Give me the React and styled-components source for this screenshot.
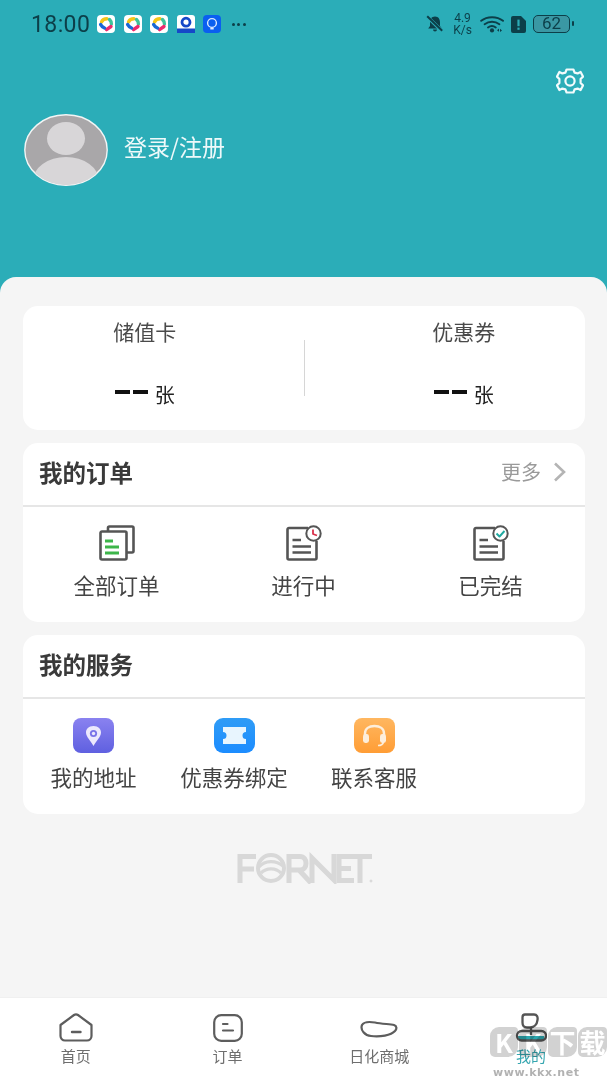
import React from "react";
import styled, { createGlobalStyle } from "styled-components";

const Global = createGlobalStyle`
  html, body { margin: 0; padding: 0; background: #f5f5f5; }
  * { box-sizing: border-box; }
  body { font-family: "Noto Sans CJK SC", "Noto Sans", sans-serif; }
`;
const Page = styled.div`
  width: 607px; height: 1080px; position: relative; overflow: hidden;
  display: flex; flex-direction: column; background: #2badb8;
`;
const Hero = styled.header`
  height: 277px; flex: none; padding: 0 24px; display: flex; flex-direction: column;
`;
const StatusBar = styled.div`
  height: 48px; margin: 0 -24px; padding: 0 33px 0 31px; display: flex; align-items: center; justify-content: space-between; color: #0c3f49;
`;
const StatusGroup = styled.div`
  display: flex; align-items: center; gap: ${p => p.$gap}px;
`;
const Clock = styled.span`
  font: 400 23px/24px Roboto, sans-serif; letter-spacing: .4px; width: 57.5px; white-space: nowrap; margin-top: 2px;
`;
const AppIcon = styled.svg`
  width: 18px; height: 18px; flex: none; display: block;
`;
const MoreDots = styled.div`
  display: flex; gap: 2.5px; margin-left: 2px;
`;
const Dot = styled.i`
  display: block; width: 3px; height: 3px; border-radius: 50%; background: #0c3f49;
`;
const Speed = styled.span`
  font: 400 12px/12px Roboto, sans-serif; text-align: center; width: 19px; margin: 0 2px 0 3px; white-space: nowrap;
`;
const Battery = styled.div`
  width: 37px; height: 18px; border: 1.5px solid #0c3f49; border-radius: 5px; background: #3a98a4;
  font: 400 17px/15px Roboto, sans-serif; text-align: center; position: relative; margin: 0 4px 0 1px;
  &::after { content: ""; position: absolute; right: -5px; top: 5px; width: 2px; height: 5px; background: #0c3f49; border-radius: 1px; }
`;
const GearRow = styled.div`
  display: flex; justify-content: flex-end; padding-top: 20px; margin-right: -1px; height: 47px;
`;
const Profile = styled.div`
  display: flex; align-items: center; gap: 16px; margin-top: 19px;
`;
const Avatar = styled.svg`
  width: 84px; height: 72px; display: block; flex: none;
`;
const LoginText = styled.span`
  color: #eef9fa; font-size: 23px; line-height: 30px; margin-top: -8px;
`;
const Sheet = styled.main`
  flex: 1; background: #f5f5f5; border-radius: 16px 16px 0 0; padding: 29px 22px 0 23px;
  display: flex; flex-direction: column; gap: 13px;
`;
const Card = styled.section`
  background: #fff; border-radius: 15px; height: ${p => p.$h}px; flex: none; display: flex; flex-direction: column;
`;
const Balance = styled.div`
  flex: 1; display: grid; grid-template-columns: 1fr 1px 1fr;
`;
const BalanceCol = styled.div`
  display: flex; flex-direction: column; align-items: center; padding: ${p => p.$right ? "11px 0 0 38px" : "11px 37px 0 0"};
`;
const BalanceLabel = styled.div`
  font-size: 21px; line-height: 28px; color: #4a4a4a;
`;
const BalanceValue = styled.div`
  display: flex; align-items: center; gap: 7px; margin-top: 34px; height: 30px; color: #222; font-size: 20px;
`;
const Dash = styled.i`
  display: block; width: 15px; height: 4px; background: #111;
`;
const Dashes = styled.span`
  display: flex; gap: 3px; margin-top: -4px;
`;
const Divider = styled.div`
  width: 1px; height: 56px; margin-top: 34px; background: #d6d6d6;
`;
const CardHead = styled.div`
  height: 64px; flex: none; border-bottom: 2px solid #e6e6e6; padding: 0 19px 5px 16px;
  display: flex; align-items: center; justify-content: space-between;
`;
const CardTitle = styled.h2`
  margin: 0; font-size: 23.5px; line-height: 30px; font-weight: 700; color: #3a3a3a;
`;
const More = styled.div`
  display: flex; align-items: center; gap: 12px; color: #9a9a9a; font-size: 20px; line-height: 26px;
`;
const OrderGrid = styled.div`
  display: grid; grid-template-columns: 187px 187px 187px; padding-top: 18px;
`;
const ServiceGrid = styled.div`
  display: grid; grid-template-columns: 141px 140px 140px; padding-top: 19px;
`;
const Item = styled.div`
  display: flex; flex-direction: column; align-items: center; gap: ${p => p.$gap}px; color: #444; font-size: 21.5px; line-height: 28px;
  white-space: nowrap;
`;
const Icon = styled.svg`
  display: block; flex: none;
`;
const Logo = styled.div`
  margin-top: 25px; display: flex; justify-content: center; align-items: center;
`;
const TabBar = styled.nav`
  height: 83px; flex: none; background: #fff; display: grid; grid-template-columns: repeat(4, 1fr); border-top: 1px solid #f0f0f0;
  margin: auto -22px 0 -23px;
`;
const Tab = styled.div`
  display: flex; flex-direction: column; align-items: center; padding-top: ${p => p.$top}px; gap: ${p => p.$gap}px;
  font-size: 15px; line-height: 20px; color: ${p => p.$active ? "#35a6b0" : "#6e6e6e"};
`;
const Watermark = styled.div`
  position: absolute; left: 490px; top: 1027px; width: 117px; pointer-events: none; mix-blend-mode: multiply;
  display: flex; flex-direction: column; gap: 9px;
`;
const WmTitle = styled.div`
  display: flex; gap: 1px;
`;
const WmChar = styled.span`
  width: ${p => p.$w}px; height: 30px; flex: none; background: #d2d2d2; color: #fff;
  border-radius: 9px 4px 10px 5px; text-align: center;
  font: 700 26px/30px "Noto Sans CJK SC", sans-serif;
`;
const WmUrl = styled.div`
  font: 700 11px/14px "DejaVu Sans", sans-serif; letter-spacing: .55px; color: #b2b2b2; padding-left: 3px; white-space: nowrap;
`;

const Pinwheel = () => (
  <AppIcon viewBox="0 0 18 18">
    <rect width="18" height="18" rx="4" fill="#fff" />
    <g fill="none" strokeWidth="3.4" strokeLinecap="round">
      <path d="M4.5 7 C5.5 4.8 7.5 3.8 10 3.8" stroke="#f5c518" />
      <path d="M12.5 4.5 C14 6 14.6 7.5 14.4 9" stroke="#3fc39a" />
      <path d="M14 11.5 L9.5 14.6" stroke="#ec2a6e" />
      <path d="M3.6 9.6 C4.6 11.6 6 12.4 7.5 13" stroke="#1967d6" />
    </g>
  </AppIcon>
);
const Bell = () => (
  <AppIcon viewBox="0 0 18 18">
    <path d="M9 1.5 C5.4 1.5 4 4.4 4 7.4 V11 L2.2 13.6 H15.8 L14 11 V7.4 C14 4.4 12.6 1.5 9 1.5 Z M7 14.6 a2 1.9 0 0 0 4 0 Z" fill="#0c3f49" />
    <path d="M1.5 2 L16 16" stroke="#2badb8" strokeWidth="3.6" />
    <path d="M1.2 1.2 L16.2 15.8" stroke="#0c3f49" strokeWidth="2" />
  </AppIcon>
);
const Wifi = () => (
  <Icon width="25" height="18" viewBox="0 0 25 18">
    <g fill="none" stroke="#0c3f49" strokeWidth="1.9" strokeLinecap="round">
      <path d="M1.2 5.8 C7 1 17 1 23 5.8" />
      <path d="M4.6 9.2 C9 6 15 6 19.4 9.2" />
      <path d="M8 12.4 C10.4 10.6 13.4 10.6 15.8 12.4" />
    </g>
    <circle cx="12" cy="15.4" r="2.1" fill="#0c3f49" />
    <path d="M17 15.2 l2-1.6 v3.2 Z M20 13.8 l2 1.6 -2 1.6 Z" fill="#0c3f49" />
  </Icon>
);
const Sim = () => (
  <Icon width="15" height="17" viewBox="0 0 15 17">
    <path d="M2 0 H10 L15 5 V15 a2 2 0 0 1 -2 2 H2 a2 2 0 0 1 -2 -2 V2 a2 2 0 0 1 2 -2 Z" fill="#0c3f49" />
    <rect x="6.4" y="3.6" width="2.2" height="6.6" fill="#2badb8" />
    <rect x="6.4" y="11.6" width="2.2" height="2.2" fill="#2badb8" />
  </Icon>
);
const Gear = () => (
  <Icon width="28" height="26" viewBox="0 0 28 26" fill="none" stroke="#f3fbfc" strokeWidth="2.2" strokeLinejoin="round">
    <path d="M10.6 1.5 H17.4 L18.6 4.6 L21.6 5.4 L24.6 4 L27 8.6 L24.6 11 V15 L27 17.4 L24.6 22 L21.6 20.6 L18.6 21.4 L17.4 24.5 H10.6 L9.4 21.4 L6.4 20.6 L3.4 22 L1 17.4 L3.4 15 V11 L1 8.6 L3.4 4 L6.4 5.4 L9.4 4.6 Z" />
    <circle cx="14" cy="13" r="4.6" />
  </Icon>
);
const AvatarPic = () => (
  <Avatar viewBox="0 0 84 72">
    <defs><clipPath id="av"><ellipse cx="42" cy="36" rx="41" ry="35" /></clipPath></defs>
    <ellipse cx="42" cy="36" rx="41.2" ry="35.2" fill="#a9a7a9" stroke="#f3f5f5" strokeWidth="1.4" />
    <g clipPath="url(#av)">
      <ellipse cx="42" cy="24.5" rx="19" ry="16.5" fill="#d8d6d8" />
      <ellipse cx="42" cy="67" rx="33" ry="24" fill="#d8d6d8" />
    </g>
  </Avatar>
);
const StackDoc = () => (
  <Icon width="36" height="36" viewBox="0 0 36 36" fill="none" stroke="#555" strokeWidth="2.6" strokeLinejoin="round">
    <path d="M9 6 V3 a1.5 1.5 0 0 1 1.5 -1.5 H33 a1.5 1.5 0 0 1 1.5 1.5 V26 a1.5 1.5 0 0 1 -1.5 1.5 H28" />
    <path d="M3 6.5 H26 a1.5 1.5 0 0 1 1.5 1.5 V33 a1.5 1.5 0 0 1 -1.5 1.5 H3 a1.5 1.5 0 0 1 -1.5 -1.5 V8 a1.5 1.5 0 0 1 1.5 -1.5 Z" fill="#fff" />
    <path d="M6 16 H14 M6 22 H20 M6 28 H20" stroke="#3db54a" strokeWidth="3" />
  </Icon>
);
const BadgeDoc = ({ children }) => (
  <Icon width="36" height="36" viewBox="0 0 36 36" fill="none" stroke="#555" strokeWidth="2.6" strokeLinejoin="round">
    <path d="M22 3 H3 a1.5 1.5 0 0 0 -1.5 1.5 V33 a1.5 1.5 0 0 0 1.5 1.5 H29 a1.5 1.5 0 0 0 1.5 -1.5 V16" />
    <path d="M6.5 15 H15 M6.5 21.5 H25 M6.5 27.5 H25" strokeWidth="2.4" />
    <circle cx="27.5" cy="8.5" r="7.2" fill="#fff" strokeWidth="2" />
    {children}
  </Icon>
);
const Pin = () => (
  <Icon width="41" height="35" viewBox="0 0 41 35">
    <defs><linearGradient id="pg" x1="0" y1="0" x2="0" y2="1"><stop offset="0" stopColor="#8a82f0" /><stop offset="1" stopColor="#5f60e0" /></linearGradient></defs>
    <rect width="41" height="35" rx="8" fill="url(#pg)" />
    <path d="M20.5 8 C15.5 8 13 11 13 14.5 C13 19 18 23 20.5 28 C23 23 28 19 28 14.5 C28 11 25.5 8 20.5 8 Z" fill="#ece9fd" />
    <circle cx="20.5" cy="15.5" r="3.6" fill="#7a74e8" />
    <circle cx="20.5" cy="15.5" r="1.7" fill="#ece9fd" />
  </Icon>
);
const Ticket = () => (
  <Icon width="41" height="35" viewBox="0 0 41 35">
    <defs><linearGradient id="tg" x1="0" y1="0" x2="0" y2="1"><stop offset="0" stopColor="#2f9cf6" /><stop offset="1" stopColor="#1c8cff" /></linearGradient></defs>
    <rect width="41" height="35" rx="9" fill="url(#tg)" />
    <path d="M9 9 H32 V14 a3.5 3.5 0 0 0 0 7 V26 H9 V21 a3.5 3.5 0 0 0 0 -7 Z" fill="#e8f5fe" />
  </Icon>
);
const Headset = () => (
  <Icon width="41" height="35" viewBox="0 0 41 35">
    <defs><linearGradient id="hg" x1="0" y1="0" x2="0" y2="1"><stop offset="0" stopColor="#ffb760" /><stop offset="1" stopColor="#ff9d35" /></linearGradient></defs>
    <rect width="41" height="35" rx="8" fill="url(#hg)" />
    <path d="M11 18 V15.5 C11 10.5 15 8 20.5 8 C26 8 30 10.5 30 15.5 V18" fill="none" stroke="#fdeedb" strokeWidth="2.4" />
    <rect x="9" y="16" width="6" height="9" rx="2.4" fill="#fdeedb" />
    <rect x="26" y="16" width="6" height="9" rx="2.4" fill="#fdeedb" />
    <path d="M29.5 24 C29 26.5 27 27.5 24 27.5" fill="none" stroke="#fdeedb" strokeWidth="1.6" />
  </Icon>
);
const Chevron = () => (
  <Icon width="13" height="20" viewBox="0 0 13 20" fill="none" stroke="#b4b4b4" strokeWidth="2.6">
    <path d="M2 1.5 L11 10 L2 18.5" />
  </Icon>
);
const FornetLogo = () => (
  <Icon width="138" height="32" viewBox="0 0 138 32" fill="none" stroke="#d8d8d8" strokeWidth="5">
    <path d="M5 31 V4.5 H21 M5 17 H19" />
    <circle cx="36" cy="16" r="13" strokeWidth="4" />
    <path d="M24 15 C30 8 41 8 48 14 M26 21 C32 15 41 16 46 21" strokeWidth="3.2" />
    <path d="M54 31 V4.5 H65 C73 4.5 73 18 65 18 H54 M64 18 L76 31" />
    <path d="M77 31 V6 L99 28 V2" />
    <path d="M119 4.5 H104 V28.5 H119 M104 16.5 H116" />
    <path d="M113 4.5 H137 M125 4.5 V31" />
    <circle cx="136" cy="29" r="1" strokeWidth="1" fill="#d8d8d8" />
  </Icon>
);
const HomeIcon = () => (
  <Icon width="34" height="29" viewBox="0 0 34 29" fill="none" stroke="#5d5d5d" strokeWidth="2.2">
    <path d="M1.5 12 L15 2 a3.4 3.4 0 0 1 4 0 L32.5 12 V23 a4.5 4.5 0 0 1 -4.5 4.5 H6 a4.5 4.5 0 0 1 -4.5 -4.5 Z" strokeLinejoin="round" />
    <path d="M13 19 H21.5" strokeLinecap="round" strokeWidth="2.4" />
  </Icon>
);
const OrderIcon = () => (
  <Icon width="30" height="28" viewBox="0 0 30 28" fill="none" stroke="#5d5d5d" strokeWidth="2.2">
    <rect x="1.2" y="1.2" width="27.6" height="25.6" rx="7" />
    <path d="M10 10 H14.5 M10 16.5 H20" strokeLinecap="round" />
  </Icon>
);
const ShopIcon = () => (
  <Icon width="38" height="18" viewBox="0 0 38 18" fill="none" stroke="#5d5d5d" strokeWidth="2.2">
    <path d="M2 5 C4 1.5 9 1.5 15 2.5 C22 4 30 4 34 5 C37 6 37 9 35 11 C31 15.5 20 17 11 16 C5 15.5 0 10 2 5 Z" />
  </Icon>
);
const MineIcon = () => (
  <Icon width="32" height="29" viewBox="0 0 32 29" fill="none" stroke="#555" strokeWidth="2.3">
    <path d="M3 23 H29 C30 25 28.5 27.5 26 27.5 H6 C3.5 27.5 2 25 3 23 Z" fill="#2ba6ae" stroke="none" />
    <rect x="2" y="18" width="29" height="9.5" rx="4.7" />
    <path d="M10 1.5 H19 C22 1.5 23 4 22.5 7 C22 11.5 19 14.5 15 14.5 H12 C9 14.5 7.5 12.5 7.5 9.5 V4.5 C7.5 2.8 8.5 1.5 10 1.5 Z" />
    <path d="M16 14.5 V22" />
  </Icon>
);

export default function App() {
  return (
    <Page>
      <Global />
      <Hero>
        <StatusBar>
          <StatusGroup $gap={8.5}>
            <Clock>18:00</Clock>
            <Pinwheel /><Pinwheel /><Pinwheel />
            <AppIcon viewBox="0 0 18 18">
              <rect width="18" height="18" rx="3" fill="#fff" />
              <circle cx="9" cy="7.2" r="4" fill="none" stroke="#1548c8" strokeWidth="2.8" />
              <rect y="13.5" width="18" height="4.5" fill="#1548c8" />
            </AppIcon>
            <AppIcon viewBox="0 0 18 18">
              <rect width="18" height="18" rx="4" fill="#0a5ff0" />
              <circle cx="9" cy="8" r="4.4" fill="none" stroke="#dbe9ff" strokeWidth="1.4" />
              <path d="M7.3 12.5 H10.7 V14.5 H7.3 Z" fill="#dbe9ff" />
            </AppIcon>
            <MoreDots><Dot /><Dot /><Dot /></MoreDots>
          </StatusGroup>
          <StatusGroup $gap={6}>
            <Bell />
            <Speed>4.9<br />K/s</Speed>
            <Wifi />
            <Sim />
            <Battery>62</Battery>
          </StatusGroup>
        </StatusBar>
        <GearRow><Gear /></GearRow>
        <Profile>
          <AvatarPic />
          <LoginText>登录/注册</LoginText>
        </Profile>
      </Hero>
      <Sheet>
        <Card $h={124}>
          <Balance>
            <BalanceCol>
              <BalanceLabel>储值卡</BalanceLabel>
              <BalanceValue><Dashes><Dash /><Dash /></Dashes>张</BalanceValue>
            </BalanceCol>
            <Divider />
            <BalanceCol $right>
              <BalanceLabel>优惠券</BalanceLabel>
              <BalanceValue><Dashes><Dash /><Dash /></Dashes>张</BalanceValue>
            </BalanceCol>
          </Balance>
        </Card>
        <Card $h={179}>
          <CardHead>
            <CardTitle>我的订单</CardTitle>
            <More>更多<Chevron /></More>
          </CardHead>
          <OrderGrid>
            <Item $gap={10}><StackDoc />全部订单</Item>
            <Item $gap={10}>
              <BadgeDoc>
                <path d="M27 4.5 V9 L31 10.5" stroke="#d9304a" strokeWidth="1.8" />
              </BadgeDoc>
              进行中
            </Item>
            <Item $gap={10}>
              <BadgeDoc>
                <path d="M23.5 8.5 L26.5 11.5 L31.5 6" stroke="#1fa9a0" strokeWidth="1.9" />
              </BadgeDoc>
              已完结
            </Item>
          </OrderGrid>
        </Card>
        <Card $h={179}>
          <CardHead><CardTitle>我的服务</CardTitle></CardHead>
          <ServiceGrid>
            <Item $gap={10}><Pin />我的地址</Item>
            <Item $gap={10}><Ticket />优惠券绑定</Item>
            <Item $gap={10}><Headset />联系客服</Item>
          </ServiceGrid>
        </Card>
        <Logo><FornetLogo /></Logo>
        <TabBar>
          <Tab $top={15} $gap={4}><HomeIcon />首页</Tab>
          <Tab $top={16} $gap={4}><OrderIcon />订单</Tab>
          <Tab $top={22} $gap={8}><ShopIcon />日化商城</Tab>
          <Tab $top={15} $gap={4} $active><MineIcon />我的</Tab>
        </TabBar>
      </Sheet>
      <Watermark>
        <WmTitle>
          <WmChar $w={28}>K</WmChar>
          <WmChar $w={28}>K</WmChar>
          <WmChar $w={29}>下</WmChar>
          <WmChar $w={29}>载</WmChar>
        </WmTitle>
        <WmUrl>www.kkx.net</WmUrl>
      </Watermark>
    </Page>
  );
}
